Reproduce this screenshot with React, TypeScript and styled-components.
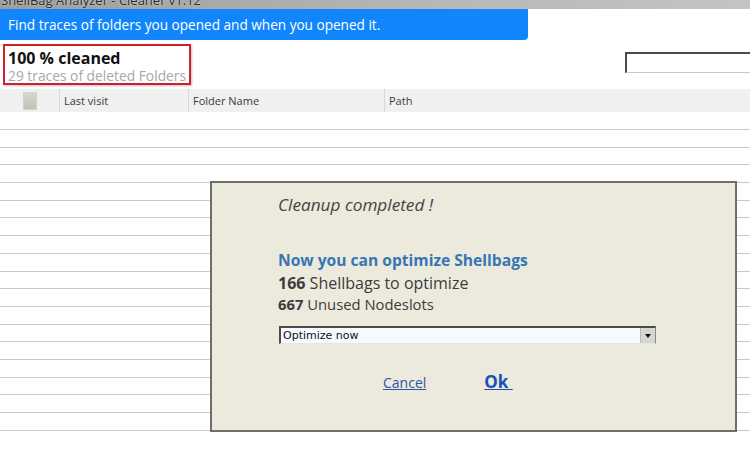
import * as React from 'react'
import styled, { createGlobalStyle } from 'styled-components'

const GlobalStyle = createGlobalStyle`
  html, body {
    margin: 0;
    padding: 0;
    background: #ffffff;
  }
  body {
    width: 750px;
    height: 450px;
    overflow: hidden;
    font-family: "Open Sans", "DejaVu Sans", sans-serif;
  }
`

const Window = styled.div`
  position: relative;
  width: 750px;
  height: 450px;
  overflow: hidden;
  background: #ffffff;
`

const TitleBar = styled.div`
  height: 9px;
  overflow: hidden;
  background: linear-gradient(to right, #9c9c9c, #b8b8b8 60%, #c4c4c4);
  color: #2a2a2a;
  font-size: 13px;
  line-height: 13px;
  white-space: nowrap;

  span {
    display: block;
    margin-top: -6px;
    padding-left: 1px;
    text-shadow: 0 0 2px #e8e8e8;
  }
`

const Banner = styled.div`
  width: 520px;
  height: 31px;
  padding-left: 8px;
  display: flex;
  align-items: center;
  background: #1185fb;
  color: #ffffff;
  font-size: 13.6px;
  border-bottom-right-radius: 4px;
`

const StatusRow = styled.div`
  display: flex;
  justify-content: space-between;
  align-items: flex-start;
  height: 49px;
`

const StatusBox = styled.div`
  margin: 4px 0 0 3px;
  width: 188px;
  height: 41px;
  border: 2px solid #d0202a;
  box-shadow: 1px 1px 2px rgba(0, 0, 0, 0.25);
  padding: 2px 0 0 3px;
  box-sizing: border-box;
`

const Percent = styled.div`
  font-size: 16px;
  font-weight: 700;
  color: #111;
  line-height: 20px;
`

const Traces = styled.div`
  font-size: 13.8px;
  color: #a8a8a8;
  line-height: 16px;
`

const SearchBox = styled.div`
  margin-top: 12px;
  width: 125px;
  height: 21px;
  box-sizing: border-box;
  border-top: 2px solid #4a4a4a;
  border-left: 2px solid #4a4a4a;
  border-bottom: 1px solid #c8c8c8;
  background: #fff;
`

const HeaderRow = styled.div`
  display: grid;
  grid-template-columns: 59px 129px 196px 1fr;
  height: 23px;
  background: #f0f0f0;
  font-size: 11px;
  color: #3a3a3a;
`

const HeaderCell = styled.div<{ $divider?: boolean }>`
  display: flex;
  align-items: center;
  padding-left: 4px;
  border-left: ${({ $divider }) => ($divider ? '1px solid #d8d8d8' : 'none')};
`

const CheckCell = styled.div`
  display: flex;
  align-items: center;
  padding-left: 23px;
`

const Check = styled.div`
  width: 12px;
  height: 16px;
  background: linear-gradient(#d8d6cc, #c4c2b6);
  border: 1px solid #d6d4ca;
`

const Rows = styled.div`
  padding-top: 17px;
`

const Row = styled.div`
  height: 17.7px;
  box-sizing: border-box;
  border-top: 1px solid #c9c9c9;
`

const Dialog = styled.div`
  position: absolute;
  left: 210px;
  top: 181px;
  width: 527px;
  height: 251px;
  box-sizing: border-box;
  border: 2px solid #6e6e6a;
  background: #eceadd;
  padding: 10px 0 0 66px;
  font-family: "Open Sans", sans-serif;
`

const Completed = styled.div`
  font-style: italic;
  font-size: 17.2px;
  color: #444;
  line-height: 24px;
  height: 56px;
`

const Headline = styled.div`
  font-weight: 700;
  font-size: 15.6px;
  color: #3875b4;
  line-height: 22px;
`

const Stat = styled.div<{ $size: number; $line: number }>`
  font-size: ${({ $size }) => $size}px;
  color: #3c3c3c;
  line-height: ${({ $line }) => $line}px;

  b {
    font-weight: 700;
  }
`

const Select = styled.div`
  margin: 13px 0 0 1px;
  width: 377px;
  height: 18px;
  box-sizing: border-box;
  display: flex;
  align-items: center;
  justify-content: space-between;
  border-top: 2px solid #4a4a4a;
  border-left: 2px solid #4a4a4a;
  border-right: 1px solid #8a8a8a;
  border-bottom: 1px solid #e6e6e6;
  background: #f6faff;
  font-family: "DejaVu Sans", sans-serif;
  font-size: 11px;
  color: #111;
  padding-left: 2px;
`

const Arrow = styled.div`
  width: 14px;
  height: 15px;
  background: #d6d6d2;
  border-left: 1px solid #bbb;
  display: flex;
  align-items: center;
  justify-content: center;

  &::after {
    content: '';
    border-left: 3px solid transparent;
    border-right: 3px solid transparent;
    border-top: 4px solid #111;
  }
`

const Actions = styled.div`
  display: flex;
  gap: 58px;
  margin: 26px 0 0 105px;
  align-items: baseline;
  line-height: 23px;
`

const Link = styled.a<{ $strong?: boolean }>`
  color: ${({ $strong }) => ($strong ? '#1b4fb5' : '#2b55a8')};
  font-size: ${({ $strong }) => ($strong ? '17px' : '14px')};
  font-weight: ${({ $strong }) => ($strong ? 700 : 400)};
  text-decoration: underline;
  white-space: pre;
  cursor: pointer;
`

const App: React.FC = () => {
  const rows = Array.from({ length: 18 }, (_, i) => i)

  return (
    <Window>
      <GlobalStyle />
      <TitleBar>
        <span>ShellBag Analyzer - Cleaner v1.12</span>
      </TitleBar>
      <Banner>Find traces of folders you opened and when you opened it.</Banner>

      <StatusRow>
        <StatusBox>
          <Percent>100 % cleaned</Percent>
          <Traces>29 traces of deleted Folders</Traces>
        </StatusBox>
        <SearchBox />
      </StatusRow>

      <HeaderRow>
        <CheckCell>
          <Check />
        </CheckCell>
        <HeaderCell $divider>Last visit</HeaderCell>
        <HeaderCell $divider>Folder Name</HeaderCell>
        <HeaderCell $divider>Path</HeaderCell>
      </HeaderRow>

      <Rows>
        {rows.map(r => (
          <Row key={r} />
        ))}
      </Rows>

      <Dialog>
        <Completed>Cleanup completed !</Completed>
        <Headline>Now you can optimize Shellbags</Headline>
        <Stat $size={16} $line={24}>
          <b>166</b> Shellbags to optimize
        </Stat>
        <Stat $size={14.8} $line={18}>
          <b>667</b> Unused Nodeslots
        </Stat>
        <Select>
          Optimize now
          <Arrow />
        </Select>
        <Actions>
          <Link>Cancel</Link>
          <Link $strong>Ok </Link>
        </Actions>
      </Dialog>
    </Window>
  )
}

export default App
